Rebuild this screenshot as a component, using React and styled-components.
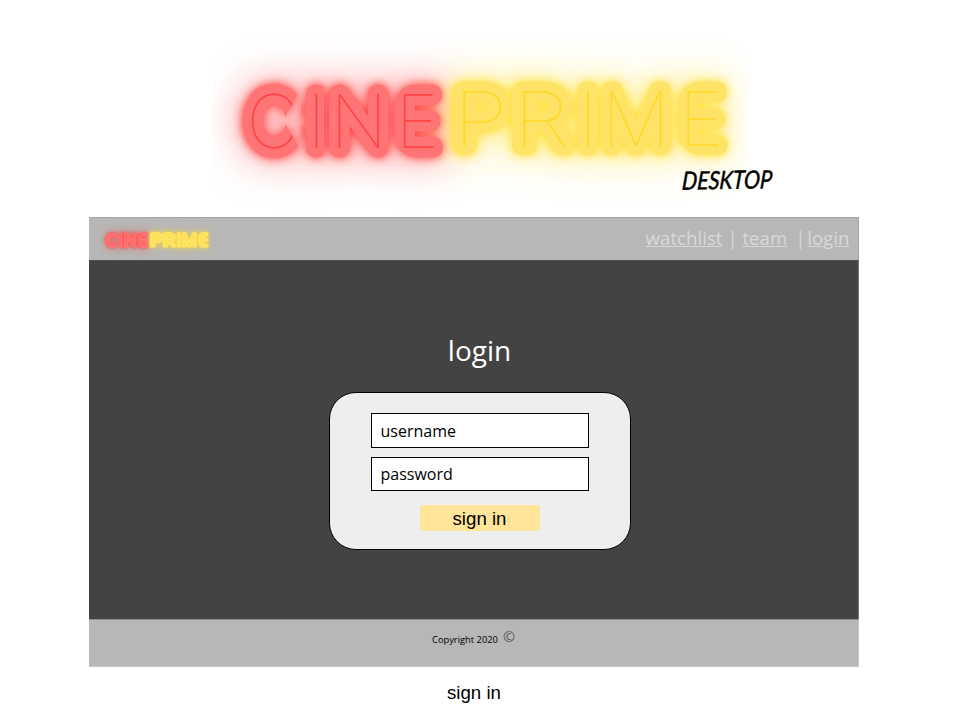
import React, { useId } from "react";
import styled, { createGlobalStyle } from "styled-components";

const GlobalStyle = createGlobalStyle`
  * { box-sizing: border-box; }
  body {
    margin: 0;
    background: #fff;
    color: #000;
    font-family: "Open Sans", sans-serif;
  }
`;

const Page = styled.div`
  width: 960px;
  height: 720px;
  overflow: hidden;
  display: flex;
  flex-direction: column;
`;

const Hero = styled.header`
  position: relative;
  height: 217px;
  padding: 25px 0 0 212px;
`;

const LogoSvg = styled.svg`
  display: block;
  width: ${(p) => p.$width}px;
  height: auto;
  overflow: hidden;
`;

const Word = styled.text`
  font-family: Inter, sans-serif;
  font-weight: 100;
  font-size: ${(p) => p.$size}px;
  stroke-linejoin: round;
  stroke-linecap: round;
`;

const Edition = styled.svg`
  position: absolute;
  left: 675px;
  top: 158px;
  width: 104px;
  height: 44px;
  overflow: visible;
`;

const EditionText = styled.text`
  font-family: Lato, sans-serif;
  font-style: italic;
  font-weight: 400;
  font-size: 25px;
  stroke: #000;
  stroke-width: 0.5px;
  stroke-linejoin: round;
`;

const Screen = styled.section`
  width: 770px;
  height: 450px;
  margin-left: 89px;
  display: flex;
  flex-direction: column;
`;

const TopBar = styled.nav`
  height: 43px;
  flex: none;
  padding: 0 8.6px 0 10px;
  display: flex;
  align-items: flex-start;
  justify-content: space-between;
  background: #b7b7b7;
  border-top: 1px solid #a3a3a3;
  border-right: 1px solid #a3a3a3;
`;

const BarLogo = styled.div`
  padding-top: 2px;
`;

const Links = styled.div`
  display: flex;
  padding-top: 7px;
  font-size: 18.67px;
  line-height: 26px;
  color: #d9d9d9;
`;

const NavLink = styled.a`
  color: inherit;
  text-decoration: underline;
`;

const Divider = styled.span`
  width: ${(p) => p.$width}px;
  padding-left: ${(p) => p.$lead}px;
`;

const Main = styled.main`
  height: 359px;
  flex: none;
  display: flex;
  flex-direction: column;
  align-items: center;
  padding: 70px 0 0 12px;
  background: #434343;
  border-top: 1px solid #505050;
  border-right: 1px solid #777;
`;

const Title = styled.h1`
  margin: 0;
  color: #fff;
  font-size: 28px;
  font-weight: 400;
  line-height: 38px;
`;

const Card = styled.form`
  width: 302px;
  height: 158px;
  margin: 23px 0 0;
  padding: 20px 41px 0;
  display: flex;
  flex-direction: column;
  align-items: center;
  background: #eee;
  border: 1px solid #000;
  border-radius: 27px;
`;

const Field = styled.div`
  width: 218px;
  height: ${(p) => p.$height}px;
  margin-bottom: ${(p) => p.$gap}px;
  padding-left: 9px;
  background: #fff;
  border: 1px solid #000;
  font-size: 16px;
  line-height: ${(p) => p.$height - 1}px;
`;

const SignIn = styled.button`
  width: 120px;
  height: 26px;
  padding: 0;
  border: 0;
  border-radius: 4px;
  background: #ffe599;
  color: #000;
  font: 18.67px/27px "Liberation Sans", Arial, sans-serif;
`;

const Footer = styled.footer`
  height: 48px;
  flex: none;
  display: flex;
  align-items: flex-start;
  gap: 5px;
  padding: 7px 0 0 343px;
  background: #b7b7b7;
  border: solid;
  border-width: 1px 1px 1px 0;
  border-color: #8c8c8c #c6c6c6 #c6c6c6;
`;

const Copyright = styled.span`
  padding-top: 6px;
  font-size: 9.33px;
  line-height: 13px;
`;

const Symbol = styled.span`
  font-size: 14.5px;
  line-height: 19px;
  color: #555;
`;

const Caption = styled.p`
  margin: 15px 0 0 447px;
  font: 18.67px/22px "Liberation Sans", Arial, sans-serif;
`;

const words = [
  {
    text: "CINE",
    letters: [{ x: 34.5 }, { x: 95.3 }, { x: 118.3 }, { x: 183.5 }],
    y: 122.5,
    size: 74,
    glow: "#ff3b3b",
    tube: "#ff7474",
    line: "#ff4545",
  },
  {
    text: "PRIME",
    letters: [{ x: 241, length: 55 }, { x: 301, length: 56 }, { x: 366.5 }, { x: 390 }, { x: 467 }],
    y: 120.5,
    size: 76,
    glow: "#ffdf2e",
    tube: "#ffe366",
    line: "#ffd92e",
  },
];

/* Trims the tube ends so that terminals are square while the bends stay round. */
function Trims({ id }) {
  return (
    <>
      <clipPath id={`${id}trimCINE`}>
        <polygon points="20,50 72,50 78,58 87,66 79,82 74,90 74,100 79,109 87,123 78,134 72,140 20,140" />
        <rect x="89.5" y="58.5" width="22.5" height="74.5" rx="3" />
        <rect x="114.5" y="58" width="64" height="75.5" rx="9" />
        <rect x="181" y="58.5" width="52" height="74.5" rx="26" />
        <rect x="205" y="58.5" width="28" height="74.5" rx="3" />
      </clipPath>
      <clipPath id={`${id}trimPRIME`}>
        <rect x="235" y="55.5" width="62.5" height="75" rx="3" />
        <rect x="298.5" y="55.5" width="63" height="75" rx="3" />
        <rect x="363" y="55.5" width="22.5" height="75" rx="3" />
        <rect x="388" y="55.5" width="72.5" height="75" rx="3" />
        <rect x="464.5" y="56" width="52" height="74.5" rx="26" />
        <rect x="488" y="56" width="28.5" height="74.5" rx="3" />
      </clipPath>
    </>
  );
}

function Logo({ width }) {
  const id = useId().replace(/[^a-zA-Z0-9]/g, "");
  return (
    <LogoSvg $width={width} viewBox="0 0 536 190" role="img" aria-label="CINEPRIME">
      <defs>
        {[5, 15, 26].map((r) => (
          <filter key={r} id={`${id}b${r}`} x="-100" y="-100" width="736" height="390" filterUnits="userSpaceOnUse">
            <feGaussianBlur stdDeviation={r} />
          </filter>
        ))}
        <Trims id={id} />
        {words.map((w) => (
          <g key={w.text} id={`${id}${w.text}`} clipPath={`url(#${id}trim${w.text})`}>
            <Word y={w.y} $size={w.size}>
              {w.letters.map((l, i) => (
                <tspan key={i} x={l.x} textLength={l.length} lengthAdjust={l.length && "spacingAndGlyphs"}>
                  {w.text[i]}
                </tspan>
              ))}
            </Word>
          </g>
        ))}
      </defs>
      {words.map((w) => (
        <g key={w.text} fill={w.glow} stroke={w.glow} strokeWidth="20">
          <g filter={`url(#${id}b26)`} opacity="0.35">
            <use href={`#${id}${w.text}`} />
          </g>
          <g filter={`url(#${id}b15)`} opacity="0.4">
            <use href={`#${id}${w.text}`} />
          </g>
          <g filter={`url(#${id}b5)`} opacity="0.95">
            <use href={`#${id}${w.text}`} />
          </g>
        </g>
      ))}
      {words.map((w) => (
        <g key={w.text}>
          <use href={`#${id}${w.text}`} fill={w.tube} stroke={w.tube} strokeWidth="19" />
          <use href={`#${id}${w.text}`} fill={w.line} stroke="none" />
        </g>
      ))}
    </LogoSvg>
  );
}

export default function App() {
  return (
    <>
      <GlobalStyle />
      <Page>
        <Hero>
          <Logo width={536} />
          <Edition viewBox="0 0 104 44">
            <EditionText x="9" y="31" textLength="90" lengthAdjust="spacingAndGlyphs" transform="rotate(-1 50 18) skewX(-5)">
              DESKTOP
            </EditionText>
          </Edition>
        </Hero>
        <Screen>
          <TopBar>
            <BarLogo>
              <Logo width={114} />
            </BarLogo>
            <Links>
              <NavLink>watchlist</NavLink>
              <Divider $width={20} $lead={5}>|</Divider>
              <NavLink>team</NavLink>
              <Divider $width={20} $lead={8}>|</Divider>
              <NavLink>login</NavLink>
            </Links>
          </TopBar>
          <Main>
            <Title>login</Title>
            <Card>
              <Field $height={35} $gap={9}>username</Field>
              <Field $height={34} $gap={14}>password</Field>
              <SignIn type="button">sign in</SignIn>
            </Card>
          </Main>
          <Footer>
            <Copyright>Copyright 2020</Copyright>
            <Symbol>©</Symbol>
          </Footer>
        </Screen>
        <Caption>sign in</Caption>
      </Page>
    </>
  );
}
